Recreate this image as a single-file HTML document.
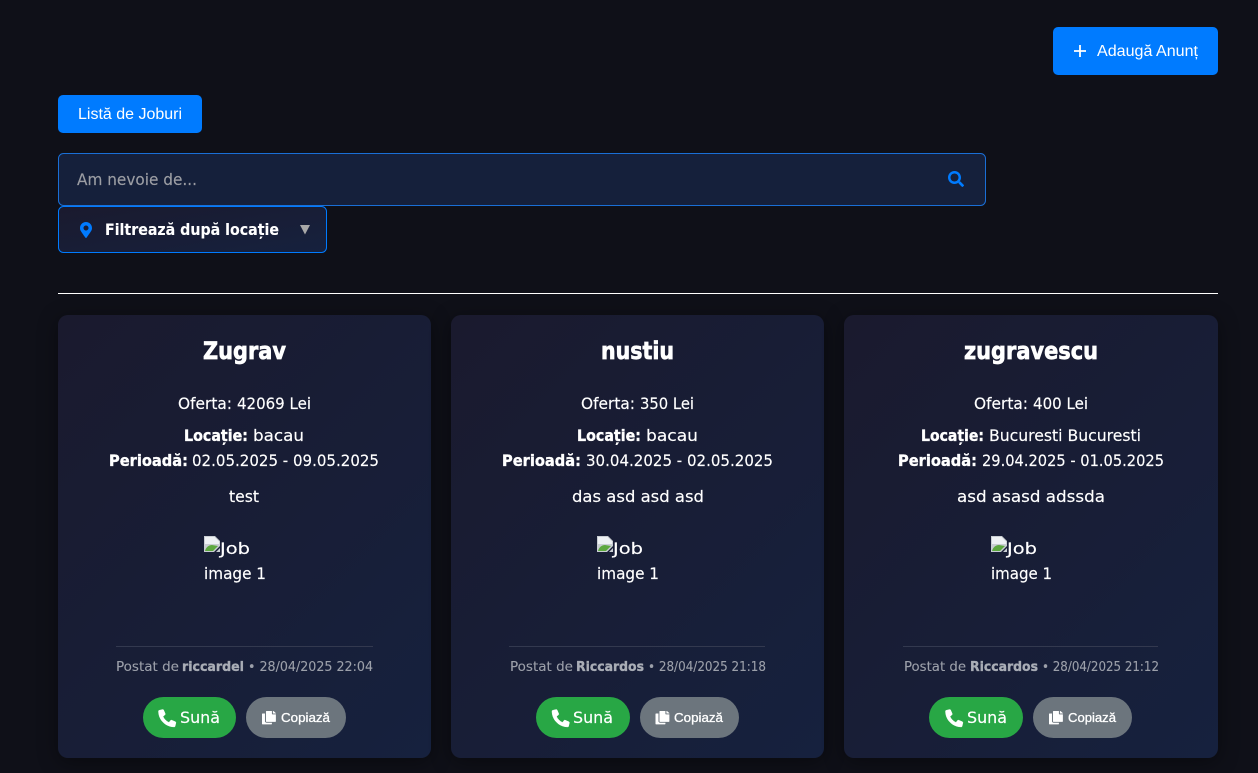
<!DOCTYPE html>
<html lang="ro"><head><meta charset="utf-8"><title>Joburi</title>
<style>
html,body{margin:0;padding:0;width:1258px;height:773px;overflow:hidden;background:#0f1018}
.c{position:absolute;top:315px;height:443px;border-radius:10px;background:linear-gradient(135deg,#1a1a2e,#16213e);box-shadow:0 4px 20px rgba(0,0,0,.4)}
svg{position:absolute;left:0;top:0}
text{font-family:"DejaVu Sans","Liberation Sans",sans-serif;fill:#fff;stroke:#fff;stroke-width:.15px;font-size:16px}
.a{font-family:"Liberation Sans",Arial,sans-serif;font-size:16px;stroke-width:0}
.b{font-weight:700;stroke-width:.35px}
.t{font-size:24px;font-weight:700;stroke-width:.7px}
.p{font-size:13.5px;fill:#9ca0aa;stroke:#9ca0aa;stroke-width:.1px}
.q{font-size:13.5px;fill:#a9adb6;stroke:#a9adb6;font-weight:700;stroke-width:.35px}
.s{font-size:16px}
.k{font-family:"Liberation Sans",Arial,sans-serif;font-size:12.5px;stroke-width:.3px}
.ph{fill:#9b9da3;stroke:#9b9da3;font-size:16px}
.f{font-size:16px;font-weight:700;stroke-width:.1px}
</style></head><body>
<div class="c" style="left:58px;width:373px"></div>
<div class="c" style="left:451px;width:373px"></div>
<div class="c" style="left:844px;width:374px"></div>
<svg width="1258" height="773" viewBox="0 0 1258 773" xmlns="http://www.w3.org/2000/svg">
<defs>
<linearGradient id="fg" x1="0" y1="0" x2="1" y2="1"><stop offset="0" stop-color="#1a1a2e"/><stop offset="1" stop-color="#16213e"/></linearGradient>
<g id="phone"><path transform="scale(.034)" fill="#fff" stroke="#fff" stroke-width="14" d="M497.39 361.8l-112-48a24 24 0 0 0-28 6.9l-49.6 60.6A370.66 370.66 0 0 1 130.6 204.11l60.6-49.6a23.94 23.94 0 0 0 6.9-28l-48-112A24.16 24.16 0 0 0 122.6.61l-104 24A24 24 0 0 0 0 48c0 256.5 207.9 464 464 464a24 24 0 0 0 23.4-18.6l24-104a24.29 24.29 0 0 0-14.01-27.6z"/></g>
<g id="copy"><path transform="translate(0 1) scale(.031 .0262)" fill="#fff" d="M320 448v40c0 13.255-10.745 24-24 24H24c-13.255 0-24-10.745-24-24V120c0-13.255 10.745-24 24-24h72v296c0 30.879 25.121 56 56 56h168zm0-344V0H152c-13.255 0-24 10.745-24 24v368c0 13.255 10.745 24 24 24h272c13.255 0 24-10.745 24-24V128H344c-13.2 0-24-10.8-24-24zm120.971-31.029L375.029 7.029A24 24 0 0 0 358.059 0H352v96h96v-6.059a24 24 0 0 0-7.029-16.97z"/></g>
<g id="broken"><path d="M0 0h11l5 5v5l-6 6H0z" fill="#c9ced3"/><path d="M1 1h9.500l4.500 4.500V8H1z" fill="#eef1f4"/><path d="M1 15c1-4 4-6 7-6l6 1-5 5z" fill="#5da83f"/><path d="M16 12v4h-4z" fill="#c9ced3"/></g>
</defs>

<rect x="1053" y="27" width="165" height="48" rx="5" fill="#007bff"/>
<path d="M1080 45v12M1074 51h12" stroke="#fff" stroke-width="1.8" fill="none"/>
<text class="a" x="1097" y="56" textLength="101" lengthAdjust="spacingAndGlyphs">Adaugă Anunț</text>

<rect x="58" y="95" width="144" height="38" rx="5" fill="#007bff"/>
<text class="a" x="78" y="119" textLength="104" lengthAdjust="spacingAndGlyphs">Listă de Joburi</text>

<rect x="58.5" y="153.5" width="927" height="52" rx="5" fill="#15203b" stroke="#1a6fd6"/>
<text class="ph" x="77" y="185" textLength="120" lengthAdjust="spacingAndGlyphs">Am nevoie de...</text>
<path transform="translate(948 171) scale(.03125)" fill="#007bff" d="M505 442.7L405.3 343c-4.5-4.5-10.6-7-17-7H372c27.6-35.3 44-79.7 44-128C416 93.1 322.9 0 208 0S0 93.1 0 208s93.1 208 208 208c48.3 0 92.7-16.4 128-44v16.3c0 6.4 2.5 12.5 7 17l99.7 99.7c9.4 9.4 24.6 9.4 33.9 0l28.3-28.3c9.4-9.4 9.4-24.6.1-34zM208 336c-70.7 0-128-57.2-128-128 0-70.7 57.2-128 128-128 70.7 0 128 57.2 128 128 0 70.7-57.2 128-128 128z"/>

<rect x="58.5" y="206.5" width="268" height="46" rx="5" fill="url(#fg)" stroke="#007bff"/>
<path transform="translate(80 222) scale(.03125)" fill="#007bff" d="M172.268 501.67C26.97 291.031 0 269.413 0 192 0 85.961 85.961 0 192 0s192 85.961 192 192c0 77.413-26.97 99.031-172.268 309.67-9.535 13.774-29.93 13.773-39.464 0zM192 272c44.183 0 80-35.817 80-80s-35.817-80-80-80-80 35.817-80 80 35.817 80 80 80z"/>
<text class="f" x="105" y="235" textLength="174" lengthAdjust="spacingAndGlyphs">Filtrează după locație</text>
<path d="M300 225h10l-5 9.5z" fill="#a8a8a8"/>

<rect x="58" y="293" width="1160" height="1" fill="#fff"/>

<!-- Card 1 -->
<text class="t" x="203" y="359" textLength="83" lengthAdjust="spacingAndGlyphs">Zugrav</text>
<text x="178" y="409" textLength="54" lengthAdjust="spacingAndGlyphs">Oferta:</text>
<text x="237" y="409" textLength="74" lengthAdjust="spacingAndGlyphs">42069 Lei</text>
<text class="b" x="184" y="441" textLength="64" lengthAdjust="spacingAndGlyphs">Locație:</text>
<text x="253" y="441" textLength="51" lengthAdjust="spacingAndGlyphs">bacau</text>
<text class="b" x="109" y="466" textLength="79" lengthAdjust="spacingAndGlyphs">Perioadă:</text>
<text x="192" y="466" textLength="187" lengthAdjust="spacingAndGlyphs">02.05.2025 - 09.05.2025</text>
<text x="229" y="502" textLength="30" lengthAdjust="spacingAndGlyphs">test</text>
<use href="#broken" x="204" y="536"/>
<text x="220" y="554" textLength="30" lengthAdjust="spacingAndGlyphs">Job</text>
<text x="204" y="579" textLength="62" lengthAdjust="spacingAndGlyphs">image 1</text>
<rect x="116" y="646" width="257" height="1" fill="#33394f"/>
<text class="p" x="116" y="671" textLength="63" lengthAdjust="spacingAndGlyphs">Postat de</text>
<text class="q" x="182" y="671" textLength="62" lengthAdjust="spacingAndGlyphs">riccardel</text>
<text class="p" x="248" y="671" textLength="125" lengthAdjust="spacingAndGlyphs">• 28/04/2025 22:04</text>
<rect x="143" y="697" width="93" height="41" rx="20.5" fill="#28a745"/>
<use href="#phone" x="158.5" y="709.5"/>
<text class="s" x="180" y="723" textLength="40" lengthAdjust="spacingAndGlyphs">Sună</text>
<rect x="246" y="697" width="100" height="41" rx="20.5" fill="#6c757d"/>
<use href="#copy" x="262" y="710"/>
<text class="k" x="281" y="722" textLength="49" lengthAdjust="spacingAndGlyphs">Copiază</text>

<!-- Card 2 -->
<text class="t" x="601" y="359" textLength="73" lengthAdjust="spacingAndGlyphs">nustiu</text>
<text x="581" y="409" textLength="54" lengthAdjust="spacingAndGlyphs">Oferta:</text>
<text x="640" y="409" textLength="54" lengthAdjust="spacingAndGlyphs">350 Lei</text>
<text class="b" x="577" y="441" textLength="64" lengthAdjust="spacingAndGlyphs">Locație:</text>
<text x="646" y="441" textLength="52" lengthAdjust="spacingAndGlyphs">bacau</text>
<text class="b" x="502" y="466" textLength="79" lengthAdjust="spacingAndGlyphs">Perioadă:</text>
<text x="586" y="466" textLength="187" lengthAdjust="spacingAndGlyphs">30.04.2025 - 02.05.2025</text>
<text x="572" y="502" textLength="132" lengthAdjust="spacingAndGlyphs">das asd asd asd</text>
<use href="#broken" x="597" y="536"/>
<text x="613" y="554" textLength="30" lengthAdjust="spacingAndGlyphs">Job</text>
<text x="597" y="579" textLength="62" lengthAdjust="spacingAndGlyphs">image 1</text>
<rect x="509" y="646" width="256" height="1" fill="#33394f"/>
<text class="p" x="510" y="671" textLength="63" lengthAdjust="spacingAndGlyphs">Postat de</text>
<text class="q" x="576" y="671" textLength="68" lengthAdjust="spacingAndGlyphs">Riccardos</text>
<text class="p" x="648" y="671" textLength="118" lengthAdjust="spacingAndGlyphs">• 28/04/2025 21:18</text>
<rect x="536" y="697" width="94" height="41" rx="20.5" fill="#28a745"/>
<use href="#phone" x="552" y="709.5"/>
<text class="s" x="573" y="723" textLength="40" lengthAdjust="spacingAndGlyphs">Sună</text>
<rect x="640" y="697" width="99" height="41" rx="20.5" fill="#6c757d"/>
<use href="#copy" x="655.5" y="710"/>
<text class="k" x="674" y="722" textLength="49" lengthAdjust="spacingAndGlyphs">Copiază</text>

<!-- Card 3 -->
<text class="t" x="964" y="359" textLength="134" lengthAdjust="spacingAndGlyphs">zugravescu</text>
<text x="974" y="409" textLength="54" lengthAdjust="spacingAndGlyphs">Oferta:</text>
<text x="1033" y="409" textLength="55" lengthAdjust="spacingAndGlyphs">400 Lei</text>
<text class="b" x="921" y="441" textLength="63" lengthAdjust="spacingAndGlyphs">Locație:</text>
<text x="989" y="441" textLength="152" lengthAdjust="spacingAndGlyphs">Bucuresti Bucuresti</text>
<text class="b" x="898" y="466" textLength="79" lengthAdjust="spacingAndGlyphs">Perioadă:</text>
<text x="982" y="466" textLength="182" lengthAdjust="spacingAndGlyphs">29.04.2025 - 01.05.2025</text>
<text x="957" y="502" textLength="148" lengthAdjust="spacingAndGlyphs">asd asasd adssda</text>
<use href="#broken" x="991" y="536"/>
<text x="1007" y="554" textLength="30" lengthAdjust="spacingAndGlyphs">Job</text>
<text x="991" y="579" textLength="61" lengthAdjust="spacingAndGlyphs">image 1</text>
<rect x="903" y="646" width="255" height="1" fill="#33394f"/>
<text class="p" x="904" y="671" textLength="62" lengthAdjust="spacingAndGlyphs">Postat de</text>
<text class="q" x="970" y="671" textLength="68" lengthAdjust="spacingAndGlyphs">Riccardos</text>
<text class="p" x="1042" y="671" textLength="117" lengthAdjust="spacingAndGlyphs">• 28/04/2025 21:12</text>
<rect x="929" y="697" width="94" height="41" rx="20.5" fill="#28a745"/>
<use href="#phone" x="945.5" y="709.5"/>
<text class="s" x="967" y="723" textLength="40" lengthAdjust="spacingAndGlyphs">Sună</text>
<rect x="1033" y="697" width="99" height="41" rx="20.5" fill="#6c757d"/>
<use href="#copy" x="1049" y="710"/>
<text class="k" x="1068" y="722" textLength="48" lengthAdjust="spacingAndGlyphs">Copiază</text>
</svg>
</body></html>
